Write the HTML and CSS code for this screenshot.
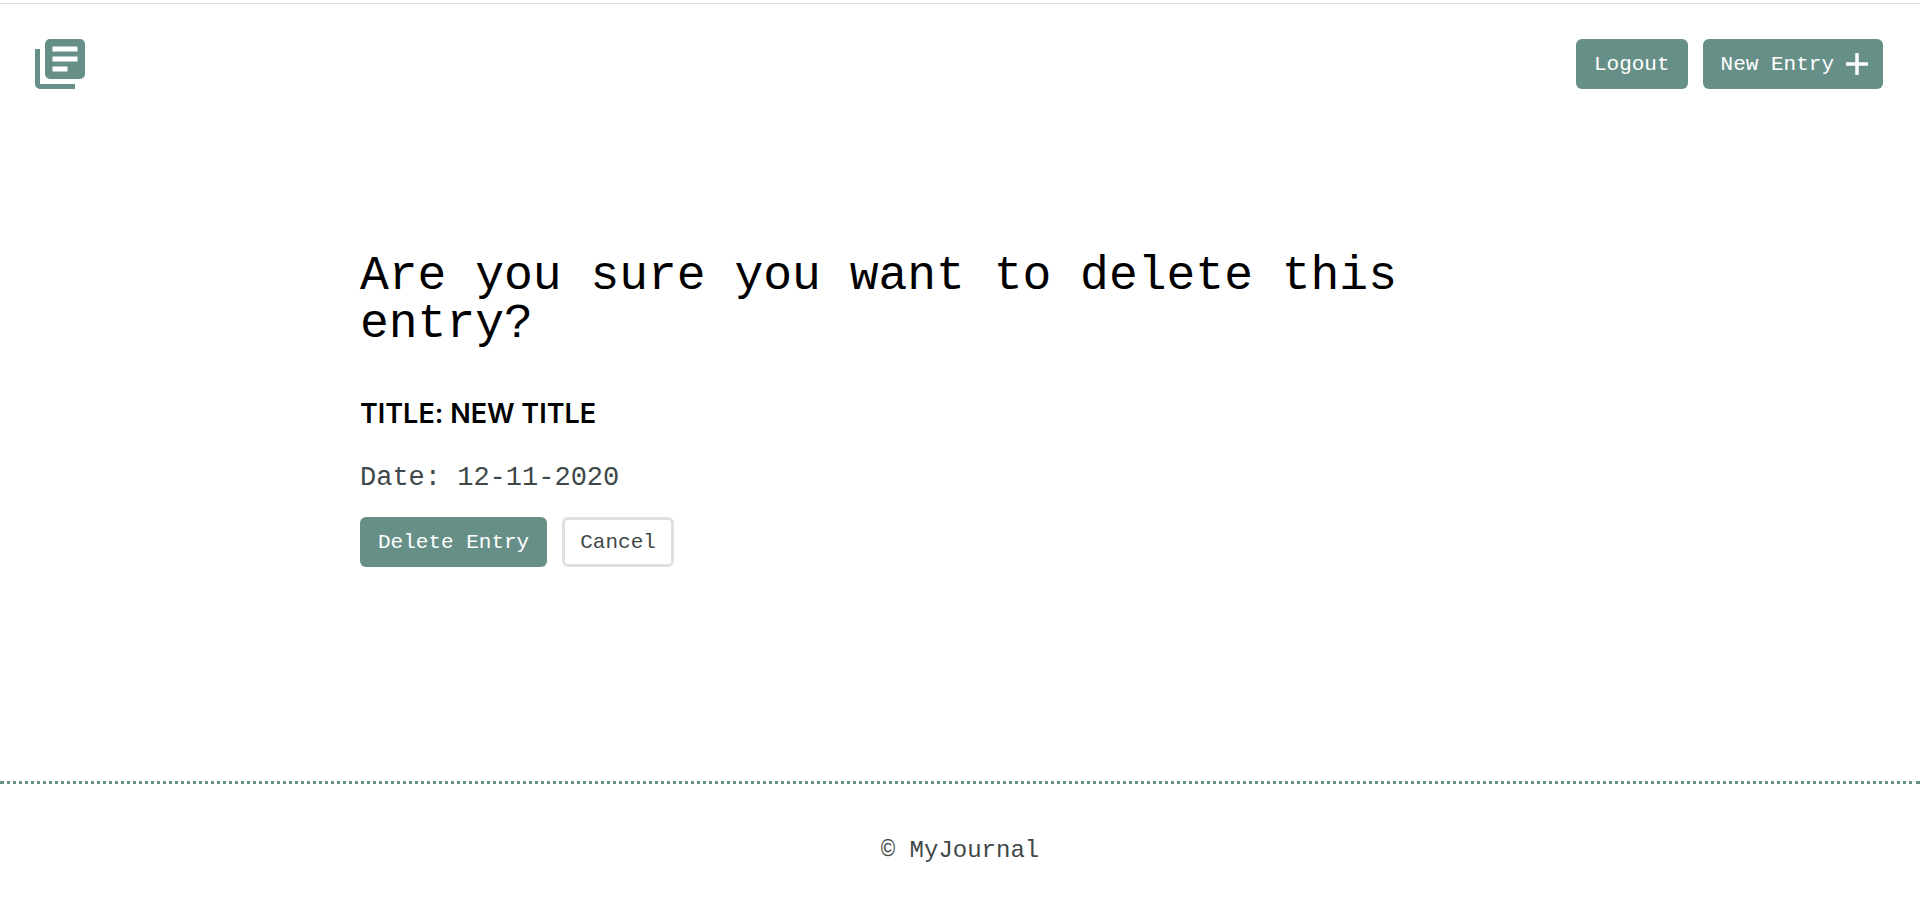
FILE: index.html
```html
<!DOCTYPE html>
<html lang="en">
<head>
<meta charset="utf-8">
<meta name="viewport" content="width=device-width, initial-scale=1">
<title>MyJournal</title>
<link rel="stylesheet" href="styles.css">
</head>
<body>
<header class="header">
  <a class="logo" href="#" aria-label="MyJournal home">
    <svg class="logo-icon" viewBox="0 0 50 50" aria-hidden="true"><path d="M0 10h5v35h35v5H5a5 5 0 0 1-5-5z"/><path fill-rule="evenodd" d="M15 0h30a5 5 0 0 1 5 5v30a5 5 0 0 1-5 5H15a5 5 0 0 1-5-5V5a5 5 0 0 1 5-5zM17.500 7.500v5h25v-5zM17.500 17.500v5h25v-5zM17.500 27.500v5h15v-5z"/></svg>
  </a>
  <nav class="actions">
    <button class="button" type="button"><span class="label">Logout</span></button>
    <button class="button button-new" type="button"><span class="label">New Entry</span><svg class="plus" viewBox="0 0 22 22" aria-hidden="true"><path d="M9.250 0h3.500v9.250H22v3.500h-9.250V22h-3.500v-9.250H0v-3.500h9.250z"/></svg></button>
  </nav>
</header>
<main class="main">
  <h1 class="heading">Are you sure you want to delete this entry?</h1>
  <h2 class="title">Title: New Title</h2>
  <p class="date">Date: 12-11-2020</p>
  <div class="actions">
    <button class="button" type="button"><span class="label">Delete Entry</span></button>
    <button class="button button-outline" type="button"><span class="label">Cancel</span></button>
  </div>
</main>
<footer class="footer">© MyJournal</footer>
</body>
</html>
```
FILE: styles.css
```css
* {
  box-sizing: border-box;
}

body {
  margin: 0;
  padding-top: 3px;
  min-height: 100vh;
  display: flex;
  flex-direction: column;
  background: #fff;
  color: #404848;
  font-family: "Liberation Mono", monospace;
}

.header {
  display: flex;
  align-items: center;
  justify-content: space-between;
  padding: 35px 37px 35px 35px;
  border-top: 1px solid #ddd;
}

.logo,
.logo-icon {
  display: block;
}

.logo-icon {
  width: 50px;
  height: 50px;
  fill: #668f88;
}

.actions {
  display: flex;
  gap: 15px;
}

.button {
  display: flex;
  align-items: center;
  height: 50px;
  padding: 0 18px;
  border: 0;
  border-radius: 6px;
  background: #668f88;
  color: #fff;
  font: 21px/24px "Liberation Mono", monospace;
  cursor: pointer;
}

.label {
  padding-top: 2px;
}

.button-new {
  gap: 12px;
  padding-right: 15px;
}

.plus {
  width: 22px;
  height: 22px;
  fill: #fff;
}

.button-outline {
  padding: 0 15px;
  border: 3px solid #e0e0e0;
  background: #fff;
  color: #404848;
}

.main {
  width: 100%;
  max-width: 1200px;
  margin: 0 auto;
  padding: 128px 0 0;
  flex: 1;
}

.heading {
  margin: 0;
  color: #000;
  font-size: 48px;
  font-weight: 400;
  line-height: 48px;
}

.title {
  margin: 46px 0 0;
  color: #000;
  font: 600 27px/40px Inter, sans-serif;
  font-variant-ligatures: no-contextual;
  text-transform: uppercase;
}

.date {
  margin: 24px 0 19px;
  font-size: 27px;
  line-height: 40px;
}

.footer {
  padding: 51px 0 35px;
  border-top: 3px dotted #668f88;
  font-size: 24px;
  line-height: 32px;
  text-align: center;
}
```
